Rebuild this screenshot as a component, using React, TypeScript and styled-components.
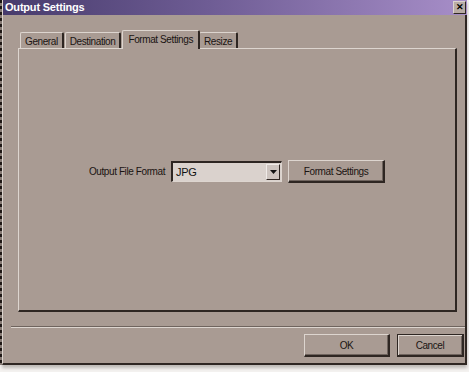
import React from 'react';
import styled, { createGlobalStyle } from 'styled-components';

const light = '#ddd5cf';
const face = '#a99b93';
const shade = '#6f645e';
const dark = '#2e2622';

const GlobalStyle = createGlobalStyle`
  html, body {
    margin: 0;
    padding: 0;
    background: #f4f2f0;
  }
  body {
    font-family: Tahoma, "Liberation Sans", Arial, sans-serif;
    font-size: 10px;
    letter-spacing: -0.4px;
    color: #111;
  }
`;

const tabs = ['General', 'Destination', 'Format Settings', 'Resize'];

const App: React.FC = () => {
  return (
    <>
      <GlobalStyle />
      <Page>
        <Edge />
        <Window>
          <TitleBar>
            <Title>Output Settings</Title>
            <CloseButton>✕</CloseButton>
          </TitleBar>

          <Content>
            <TabStrip>
              {tabs.map((t) => (
                <Tab key={t} $active={t === 'Format Settings'}>
                  {t}
                </Tab>
              ))}
            </TabStrip>

            <Panel>
              <FormatRow>
                <Label>Output File Format</Label>
                <Combo>
                  <span>JPG</span>
                  <ComboArrow>
                    <svg width="7" height="4" viewBox="0 0 7 4">
                      <path d="M0 0h7L3.5 4z" fill="#111" />
                    </svg>
                  </ComboArrow>
                </Combo>
                <PushButton $width={97}>Format Settings</PushButton>
              </FormatRow>
            </Panel>
          </Content>

          <Separator />

          <ButtonRow>
            <PushButton $width={86}>OK</PushButton>
            <PushButton $width={67} $default>
              Cancel
            </PushButton>
          </ButtonRow>
        </Window>
      </Page>
    </>
  );
};

const Page = styled.div`
  display: flex;
  width: 469px;
  height: 372px;
  overflow: hidden;
`;

const Edge = styled.div`
  width: 2px;
  height: 365px;
  background: repeating-linear-gradient(
    to bottom,
    #1a1412 0px,
    #1a1412 3px,
    #8a7e78 3px,
    #8a7e78 6px
  );
`;

const Window = styled.div`
  width: 462px;
  height: 363px;
  display: flex;
  flex-direction: column;
  background: ${face};
  border-left: 1px solid ${light};
  border-right: 2px solid ${dark};
  border-bottom: 2px solid ${dark};
  box-shadow: 0 3px 3px rgba(90, 80, 75, 0.35);
`;

const TitleBar = styled.div`
  height: 15px;
  display: flex;
  align-items: center;
  justify-content: space-between;
  background: linear-gradient(to right, #473b6c 0%, #6f5d95 45%, #a78ec8 100%);
  margin-right: -2px;
`;

const Title = styled.div`
  color: #fff;
  font-weight: bold;
  font-size: 11px;
  letter-spacing: -0.2px;
  padding-left: 2px;
  margin-top: -1px;
`;

const CloseButton = styled.div`
  width: 11px;
  height: 11px;
  margin-right: 1px;
  margin-top: -1px;
  display: flex;
  align-items: center;
  justify-content: center;
  background: #b9aca4;
  border-top: 1px solid ${light};
  border-left: 1px solid ${light};
  border-right: 1px solid ${dark};
  border-bottom: 1px solid ${dark};
  font-size: 9px;
  font-weight: bold;
  letter-spacing: 0;
  line-height: 1;
  color: #000;
`;

const Content = styled.div`
  padding: 14px 8px 0 15px;
  display: flex;
  flex-direction: column;
`;

const TabStrip = styled.div`
  display: flex;
  align-items: flex-end;
  padding-left: 2px;
  height: 19px;
`;

const Tab = styled.div<{ $active?: boolean }>`
  position: relative;
  z-index: ${(p) => (p.$active ? 2 : 1)};
  height: ${(p) => (p.$active ? '19px' : '16px')};
  padding: ${(p) => (p.$active ? '3px 5px 0 5px' : '1px 4px 0 4px')};
  margin: ${(p) => (p.$active ? '0 -1px -1px 0' : '0 1px 0 0')};
  box-sizing: border-box;
  display: flex;
  align-items: ${(p) => (p.$active ? 'flex-start' : 'center')};
  background: ${face};
  border-top: 1px solid ${light};
  border-left: 1px solid ${light};
  border-right: 2px solid ${dark};
  border-top-left-radius: 2px;
  border-top-right-radius: 2px;
  white-space: nowrap;
  font-size: 10px;
  color: #1a1412;
`;

const Panel = styled.div`
  height: 264px;
  box-sizing: border-box;
  background: ${face};
  border-top: 1px solid ${light};
  border-left: 1px solid ${light};
  border-right: 2px solid ${dark};
  border-bottom: 2px solid ${dark};
  padding-top: 111px;
`;

const FormatRow = styled.div`
  display: flex;
  align-items: center;
  justify-content: center;
  gap: 6px;
`;

const Label = styled.span`
  font-size: 10px;
  color: #1a1412;
`;

const Combo = styled.div`
  width: 111px;
  height: 21px;
  box-sizing: border-box;
  display: flex;
  align-items: center;
  justify-content: space-between;
  padding: 0 1px 0 3px;
  background: #dad2cd;
  border-top: 2px solid ${dark};
  border-left: 2px solid ${dark};
  border-right: 1px solid ${light};
  border-bottom: 1px solid ${light};
  font-size: 11px;
  letter-spacing: -0.3px;
  color: #111;
`;

const ComboArrow = styled.div`
  width: 12px;
  height: 14px;
  display: flex;
  align-items: center;
  justify-content: center;
  background: #cdc4bf;
  border-top: 1px solid #f0ebe8;
  border-left: 1px solid #f0ebe8;
  border-right: 1px solid ${dark};
  border-bottom: 1px solid ${dark};
`;

const PushButton = styled.div<{ $width: number; $default?: boolean }>`
  width: ${(p) => p.$width}px;
  height: 23px;
  box-sizing: border-box;
  display: flex;
  align-items: center;
  justify-content: center;
  background: ${face};
  border-top: 1px solid ${(p) => (p.$default ? dark : light)};
  border-left: 1px solid ${(p) => (p.$default ? dark : light)};
  border-right: 2px solid ${dark};
  border-bottom: 2px solid ${dark};
  box-shadow: ${(p) =>
    p.$default
      ? `inset 1px 1px 0 ${light}, inset -1px -1px 0 ${shade}`
      : `inset -1px -1px 0 ${shade}`};
  font-size: 10px;
  color: #1a1412;
`;

const Separator = styled.div`
  height: 0;
  margin: 14px 0 0 8px;
  border-top: 1px solid ${shade};
  border-bottom: 1px solid ${light};
`;

const ButtonRow = styled.div`
  display: flex;
  justify-content: flex-end;
  gap: 7px;
  padding: 6px 1px 0 0;
`;

export default App;
